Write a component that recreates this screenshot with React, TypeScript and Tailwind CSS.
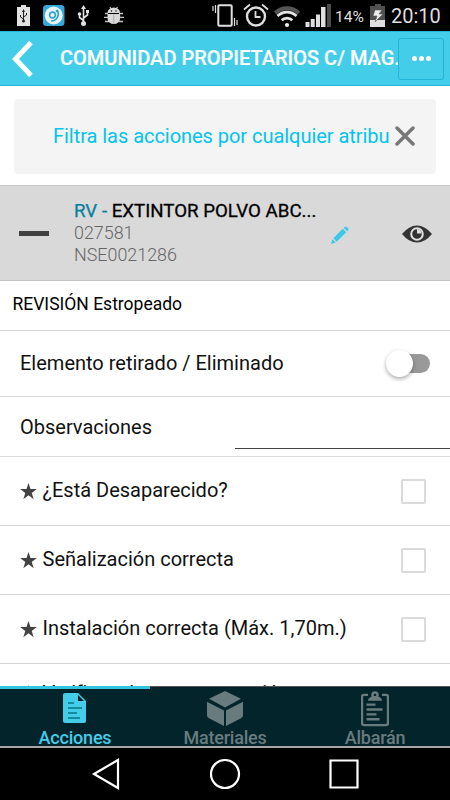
import React from 'react';

function StatusBar() {
  return (
    <div className="flex h-[31px] w-full shrink-0 items-center bg-black text-[#dedede]">
      <svg className="h-[31px] w-[130px] shrink-0" viewBox="0 0 130 31">
        <path d="M21 5h5v2h4v19H17V7h4z" fill="#e2e2e2" />
        <g stroke="#222" fill="none"><path d="M23.500 11v10M23.500 19l-3-2v-2M23.500 17l3-2v-2" /></g>
        <circle cx="23.500" cy="21" r="1.500" fill="#222" />
        <path d="M23.500 9l1.500 3h-3z" fill="#222" />
        <rect x="43" y="5" width="21.500" height="21" rx="3.500" fill="#35a9d8" />
        <circle cx="53.700" cy="15.500" r="9" fill="#e9f2f5" />
        <g fill="none" stroke="#2da3d2" strokeWidth="1.600">
          <circle cx="52.500" cy="15" r="2.900" />
          <path d="M57 10c3 5 0 11-6 11" />
        </g>
        <circle cx="57" cy="11" r="1.300" fill="#2da3d2" />
        <g fill="none" stroke="#e2e2e2" strokeWidth="1.600"><path d="M83.500 9v14M83.500 20.500l-4-3v-3M83.500 18l4-3v-3" /></g>
        <path d="M83.500 5l2.500 4h-5zM86 10h3v3h-3z" fill="#e2e2e2" />
        <circle cx="83.500" cy="23.500" r="2.500" fill="#e2e2e2" /><circle cx="79.500" cy="14" r="1.800" fill="#e2e2e2" />
        <g stroke="#c5c5c5" strokeWidth="1.300"><path d="M110 7l2 3M117.500 7l-2 3M105 13.500h3M104 17.300h5M105 21.500h4M123 13.500h-4M118.500 17.300h5.500M123 21.500h-4" /></g>
        <path d="M107.500 13a6.300 5.500 0 0 1 12.600 0z" fill="#d8d8d8" />
        <path d="M107.500 14h12.600v4.500a6.300 5.500 0 0 1-12.600 0z" fill="#d8d8d8" />
        <path d="M113.800 14v10" stroke="#999" strokeWidth=".7" />
        <circle cx="111.500" cy="11" r=".7" /><circle cx="116" cy="11" r=".7" />
      </svg>
      <svg className="ml-[80px] h-[31px] w-[122px] shrink-0" viewBox="210 0 122 31">
        <g fill="none" stroke="#dedede">
          <rect x="218.300" y="5.300" width="13.400" height="20.400" rx="1" strokeWidth="2" />
          <path d="M215.500 5v8M213 6v5M234.500 18v8M237 20v5" strokeWidth="1.200" />
          <circle cx="256" cy="16.500" r="9" strokeWidth="2.400" />
          <path d="M255.500 11v6h5" strokeWidth="1.800" />
          <path d="M244 9.500l6-5M262 4.500l6 5" strokeWidth="1.800" />
        </g>
        <path d="M274 11.500a19 19 0 0 1 26 0l-2.500 3a15 15 0 0 0-21 0z" fill="#555" />
        <g fill="none" stroke="#e5e5e5" strokeWidth="2.800"><path d="M277.500 16a13.500 13.500 0 0 1 19 0M281.700 20.300a7.500 7.500 0 0 1 10.600 0" /></g>
        <circle cx="287" cy="25" r="2.100" fill="#eee" />
        <path d="M305.500 22h4v5h-4zM310.700 19h4v8h-4zM316 14.500h4V27h-4zM321 7h4.500v20H321z" fill="#dedede" />
        <path d="M327 4h4v23h-4z" fill="#4c4c4c" />
      </svg>
      <span className="ml-[3px] mt-[2px] w-[31px] whitespace-nowrap text-[15.500px] tracking-[0.1px]">14%</span>
      <svg className="ml-[4px] h-[31px] w-[15px] shrink-0" viewBox="0 0 15 31">
        <path d="M5 4h6v2h4v15H0V6h5z" fill="#505050" /><path d="M0 20h15v7H0z" fill="#dedede" />
        <path d="M5 10h7l-3 4h4l-8 8 2-6H3z" fill="#eee" stroke="#555" strokeWidth=".6" />
      </svg>
      <span className="ml-[6px] mt-px whitespace-nowrap text-[20px]">20:10</span>
    </div>
  );
}

function Check({ label, first }: { label: string; first?: boolean }) {
  return (
    <div className={first ? "flex h-[68px] shrink-0 items-center border-b border-[#d3d3d3] pl-5 pr-6" : "flex h-[69px] shrink-0 items-center border-b border-[#d3d3d3] pl-5 pr-6"}>
      <Star />
      <span className="mb-[2px] ml-[5.500px] flex-1 whitespace-nowrap">{label}</span>
      <div className="h-[25px] w-[25px] rounded-[2px] border-[2.500px] border-[#dadada]" />
    </div>
  );
}

const Star = () => (
  <svg className="h-[17px] w-[17px] shrink-0" viewBox="0 0 17 17" fill="#424242">
    <path d="M8.500 0l2 6h6.300l-5.100 3.900 2 6.300-5.200-3.900-5.200 3.900 2-6.300L.2 6h6.300z" />
  </svg>
);

export default function App() {
  return (
    <div className="flex h-[800px] w-[450px] flex-col overflow-hidden bg-white font-['Roboto',sans-serif] text-[20px] leading-[24px] text-[#111]">
      <StatusBar />
      <header className="flex h-[55px] shrink-0 items-center border-b border-t border-[#25b7d8] bg-[#43cde9] text-white">
        <svg className="ml-[12px] h-[36px] w-[21px] shrink-0" viewBox="0 0 21 36" fill="none" stroke="white" strokeWidth="5"><path d="M19 1.500L3.500 18 19 34.500" /></svg>
        <h1 className="mb-[2px] ml-[27px] w-[338px] shrink-0 overflow-hidden whitespace-nowrap text-[20px] font-medium [-webkit-text-stroke:.2px_white]">COMUNIDAD PROPIETARIOS C/ MAG...</h1>
        <button className="flex h-[42px] w-[46px] shrink-0 items-center justify-center gap-[2px] rounded-[3px] border border-[#20b5d6]">
          <i className="h-[5px] w-[5px] rounded-full bg-white" /><i className="h-[5px] w-[5px] rounded-full bg-white" /><i className="h-[5px] w-[5px] rounded-full bg-white" />
        </button>
      </header>
      <main className="flex h-[600px] shrink-0 flex-col overflow-hidden">
        <section className="flex h-[100px] shrink-0 border-b border-[#c8c8c8] px-[14px] pt-[13px]">
          <div className="flex h-[75px] w-[422px] items-center rounded-[4px] bg-[#f4f4f4] pl-[39px]">
            <span className="mb-[2px] w-[336px] overflow-hidden whitespace-nowrap text-[20px] text-[#03c4ec]"><span className="tracking-[-0.04px]">Filtra las acciones por cualquier atributo</span></span>
            <svg className="mb-[2px] ml-[6px] h-[20px] w-[20px]" viewBox="0 0 20 20" stroke="#787878" strokeWidth="3.500" strokeLinecap="round"><path d="M2 2l16 16M18 2L2 18" /></svg>
          </div>
        </section>
        <section className="flex h-[95px] shrink-0 items-center border-b border-[#c4c4c4] bg-[#d9d9d9]">
          <div className="ml-[19px] mt-px h-[5px] w-[30px] bg-[#414141]" />
          <div className="ml-[25px] w-[257px] whitespace-nowrap text-[17.900px] font-light leading-[22.500px] text-[#666]">
            <div className="relative top-px text-[18.700px] font-normal text-black"><span className="text-[#087f9b] [-webkit-text-stroke:.25px_#087f9b]">RV - </span><span className="[-webkit-text-stroke:.3px_black]">EXTINTOR POLVO ABC...</span></div>
            <div>027581</div><div>NSE0021286</div>
          </div>
          <svg className="mt-[3px] h-[18px] w-[18px]" viewBox="0 0 19 19" fill="#3ac9e8"><path d="M0 19l1.500-5L5 17.500zM2.500 13L12.500 3l3.500 3.500-10 10zM13.500 2l1-1q1-1 2 0l1.500 1.500q1 1 0 2l-1 1z" /></svg>
          <svg className="ml-[53px] mt-px h-[20px] w-[30px]" viewBox="0 0 30 20" fill="none"><path d="M0 10Q7 1.500 15 1.500T30 10Q23 18.500 15 18.500T0 10z" fill="#333" /><circle cx="15" cy="10" r="5.800" stroke="#e0e0e0" strokeWidth="2" fill="#333" /><path d="M15 5v4.500h4.500a5 5 0 0 0-4.500-4.500z" fill="#e0e0e0" /></svg>
        </section>
        <div className="flex h-[50px] shrink-0 items-center border-b border-[#d3d3d3] pb-[3px] pl-[12.500px] text-[17.500px] text-black">REVISIÓN Estropeado</div>
        <div className="flex h-[66px] shrink-0 items-center border-b border-[#dcdcdc] pl-5 pr-5">
          <span className="mb-px flex-1">Elemento retirado / Eliminado</span>
          <div className="flex h-[19px] w-[44px] items-center rounded-full bg-[linear-gradient(to_right,transparent_15px,#999_15px)]">
            <i className="h-[27px] w-[27px] rounded-full bg-white shadow-[0_2px_4px_#0005]" />
          </div>
        </div>
        <div className="flex h-[60px] shrink-0 items-end border-b border-[#dcdcdc] pb-[7px] pl-5">
          <span className="mb-[10px] w-[215px]">Observaciones</span><div className="h-px flex-1 bg-[#444]" />
        </div>
        <Check label="¿Está Desaparecido?" />
        <Check label="Señalización correcta" />
        <Check label="Instalación correcta (Máx. 1,70m.)" />
        <div className="flex shrink-0 items-center pl-5 pt-[17px]">
          <Star />
          <span className="ml-[5.500px] whitespace-nowrap tracking-[-0.3px]">Verificar el peso y su presión</span>
        </div>
      </main>
      <nav className="grid h-[62px] shrink-0 grid-cols-3 border-b-2 border-[#a9a3a8] bg-[#04242b] text-[18px] font-medium tracking-[-0.2px] text-[#687b7e]">
        <div className="flex flex-col items-center border-t-[3px] border-[#35c4df] text-[#43cde9]">
          <svg className="mt-[3px] h-[32px] w-[24px]" viewBox="0 0 24 32"><path d="M2 1h13l8 8v20q0 2-2 2H2q-2 0-2-2V3q0-2 2-2z" fill="#43cde9" /><path d="M15 3v6h6z" fill="#04242b" /><path d="M5 11h6M5 16h14M5 21h9M5 26h12" stroke="#087486" strokeWidth="1.300" /></svg>
          <span className="mt-[2px]">Acciones</span>
        </div>
        <div className="flex flex-col items-center border-t border-[#555]">
          <svg className="mt-[4px] h-[36px] w-[36px]" viewBox="0 0 36 37" preserveAspectRatio="none" fill="#687b7e"><path d="M18 0l16 8-16 9L2 8zM0 11l17 9v16L2 28q-2-1-2-3zM36 11v14q0 2-2 3l-15 8V20z" /></svg>
          <span className="-mt-px">Materiales</span>
        </div>
        <div className="flex flex-col items-center border-t border-[#555]">
          <svg className="mt-[4px] h-[36px] w-[28px]" viewBox="0 0 28 37" preserveAspectRatio="none" fill="none" stroke="#687b7e" strokeWidth="2.400"><path d="M7 4H3Q1 4 1 6v27q0 2 2 2h22q2 0 2-2V6q0-2-2-2h-4" /><circle cx="14" cy="4" r="2.500" strokeWidth="2.500" /><path d="M7 10q0-3 4-4h6q4 1 4 4z" fill="#687b7e" stroke="none" /><path d="M5.500 14h9M5.500 19h16M5.500 24h10M5.500 29h13" /></svg>
          <span className="-mt-px">Albarán</span>
        </div>
      </nav>
      <footer className="flex h-[52px] shrink-0 items-center bg-black">
        <svg className="h-[52px] w-full" viewBox="0 0 450 52" fill="none" stroke="white" strokeWidth="2.200"><path d="M94 26l24-14v28zM330.500 12.500h27v27h-27z" /><circle cx="225" cy="26" r="14" /></svg>
      </footer>
    </div>
  );
}
